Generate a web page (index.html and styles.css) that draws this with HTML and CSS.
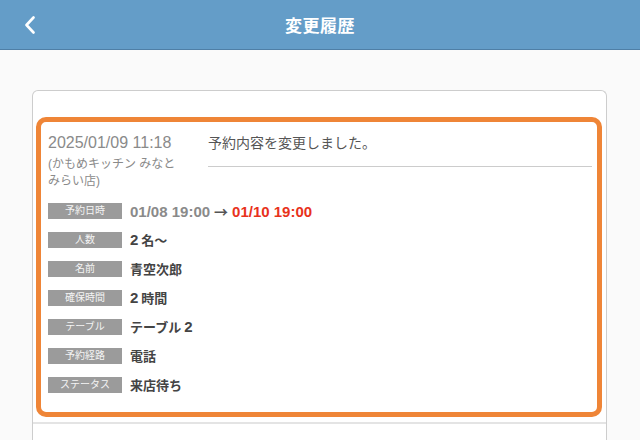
FILE: index.html
```html
<!DOCTYPE html>
<html lang="ja">
<head>
  <meta charset="UTF-8" />
  <meta name="viewport" content="width=device-width, initial-scale=1.0"/>
  <title>変更履歴</title>
  <link rel="stylesheet" href="styles.css">
</head>
<body>
  <header class="topbar">
    <a class="back" href="#">
      <svg width="12" height="18" viewBox="0 0 12 18"><path d="M9.5 1.5 L2.5 9 L9.5 16.5" fill="none" stroke="#fff" stroke-width="2.6" stroke-linecap="round" stroke-linejoin="round"/></svg>
    </a>
    <h1>変更履歴</h1>
  </header>

  <main class="content">
    <div class="card">
      <div class="entry active">
        <div class="entry-head">
          <div class="when">
            <div class="date">2025/01/09 11:18</div>
            <div class="shop">(かもめキッチン みなと みらい店)</div>
          </div>
          <div class="message">予約内容を変更しました。</div>
        </div>

        <ul class="fields">
          <li><span class="label">予約日時</span><span class="value num"><span class="old">01/08 19:00</span><span class="arrow">→</span><span class="new">01/10 19:00</span></span></li>
          <li><span class="label">人数</span><span class="value"><span class="digit">2</span>名〜</span></li>
          <li><span class="label">名前</span><span class="value">青空次郎</span></li>
          <li><span class="label">確保時間</span><span class="value"><span class="digit">2</span>時間</span></li>
          <li><span class="label">テーブル</span><span class="value">テーブル<span class="digit after">2</span></span></li>
          <li><span class="label">予約経路</span><span class="value">電話</span></li>
          <li><span class="label">ステータス</span><span class="value">来店待ち</span></li>
        </ul>
      </div>
      <div class="entry next"></div>
    </div>
  </main>
</body>
</html>
```

FILE: styles.css
```css
body {
  margin: 0;
  background: #fafafa;
  font-family: "Liberation Sans", "Noto Sans CJK JP", sans-serif;
  color: #444;
  height: 440px;
  overflow: hidden;
}
.topbar {
  position: relative;
  height: 49px;
  background: #649dc8;
  border-bottom: 1px solid #4f7fa6;
  display: flex;
  align-items: center;
  justify-content: center;
}
.topbar h1 {
  margin: 0;
  color: #fff;
  font-size: 17px;
  font-weight: bold;
  letter-spacing: 0.5px;
}
.back {
  position: absolute;
  left: 24px;
  top: 16px;
  display: block;
  line-height: 0;
}
.content {
  padding: 40px 33px 0 32px;
}
.card {
  box-sizing: border-box;
  background: #fff;
  border: 1px solid #cdcdcd;
  border-bottom: 0;
  border-radius: 6px 6px 0 0;
  padding: 26px 4px 0 3px;
  height: 350px;
}
.entry.active {
  border: 5px solid #ef8537;
  border-radius: 10px;
  padding: 11px 5px 13px 7px;
}
.entry.next {
  margin-top: 5px;
  border-top: 2px solid #e4e4e4;
  margin-left: -3px;
  margin-right: -4px;
}
.entry-head {
  display: flex;
  gap: 10px;
}
.when {
  width: 150px;
  flex-shrink: 0;
  color: #8a8a8a;
}
.date {
  font-size: 16px;
  line-height: 20px;
}
.shop {
  font-size: 12px;
  line-height: 17px;
  margin-top: 3px;
  width: 140px;
}
.message {
  flex: 1;
  font-size: 14px;
  line-height: 20px;
  color: #555;
  padding-bottom: 13px;
  border-bottom: 1px solid #cccccc;
  align-self: flex-start;
}
.fields {
  list-style: none;
  margin: 6px 0 0;
  padding: 0;
}
.fields li {
  display: flex;
  align-items: center;
  height: 29px;
  gap: 8px;
}
.label {
  width: 74px;
  height: 16px;
  line-height: 16px;
  background: #9b9b9b;
  color: #f4f4f4;
  font-size: 10px;
  text-align: center;
}
.value {
  font-size: 13px;
  font-weight: bold;
  color: #444;
}
.value.num {
  font-size: 15px;
}
.digit {
  font-size: 15px;
  margin-right: 3px;
}
.digit.after {
  margin: 0 0 0 3px;
}
.old {
  color: #8a8a8a;
}
.arrow {
  font-family: "Noto Sans CJK JP", sans-serif;
  font-size: 14px;
  color: #555;
  margin: 0 4px;
}
.new {
  color: #e8321c;
}
```
